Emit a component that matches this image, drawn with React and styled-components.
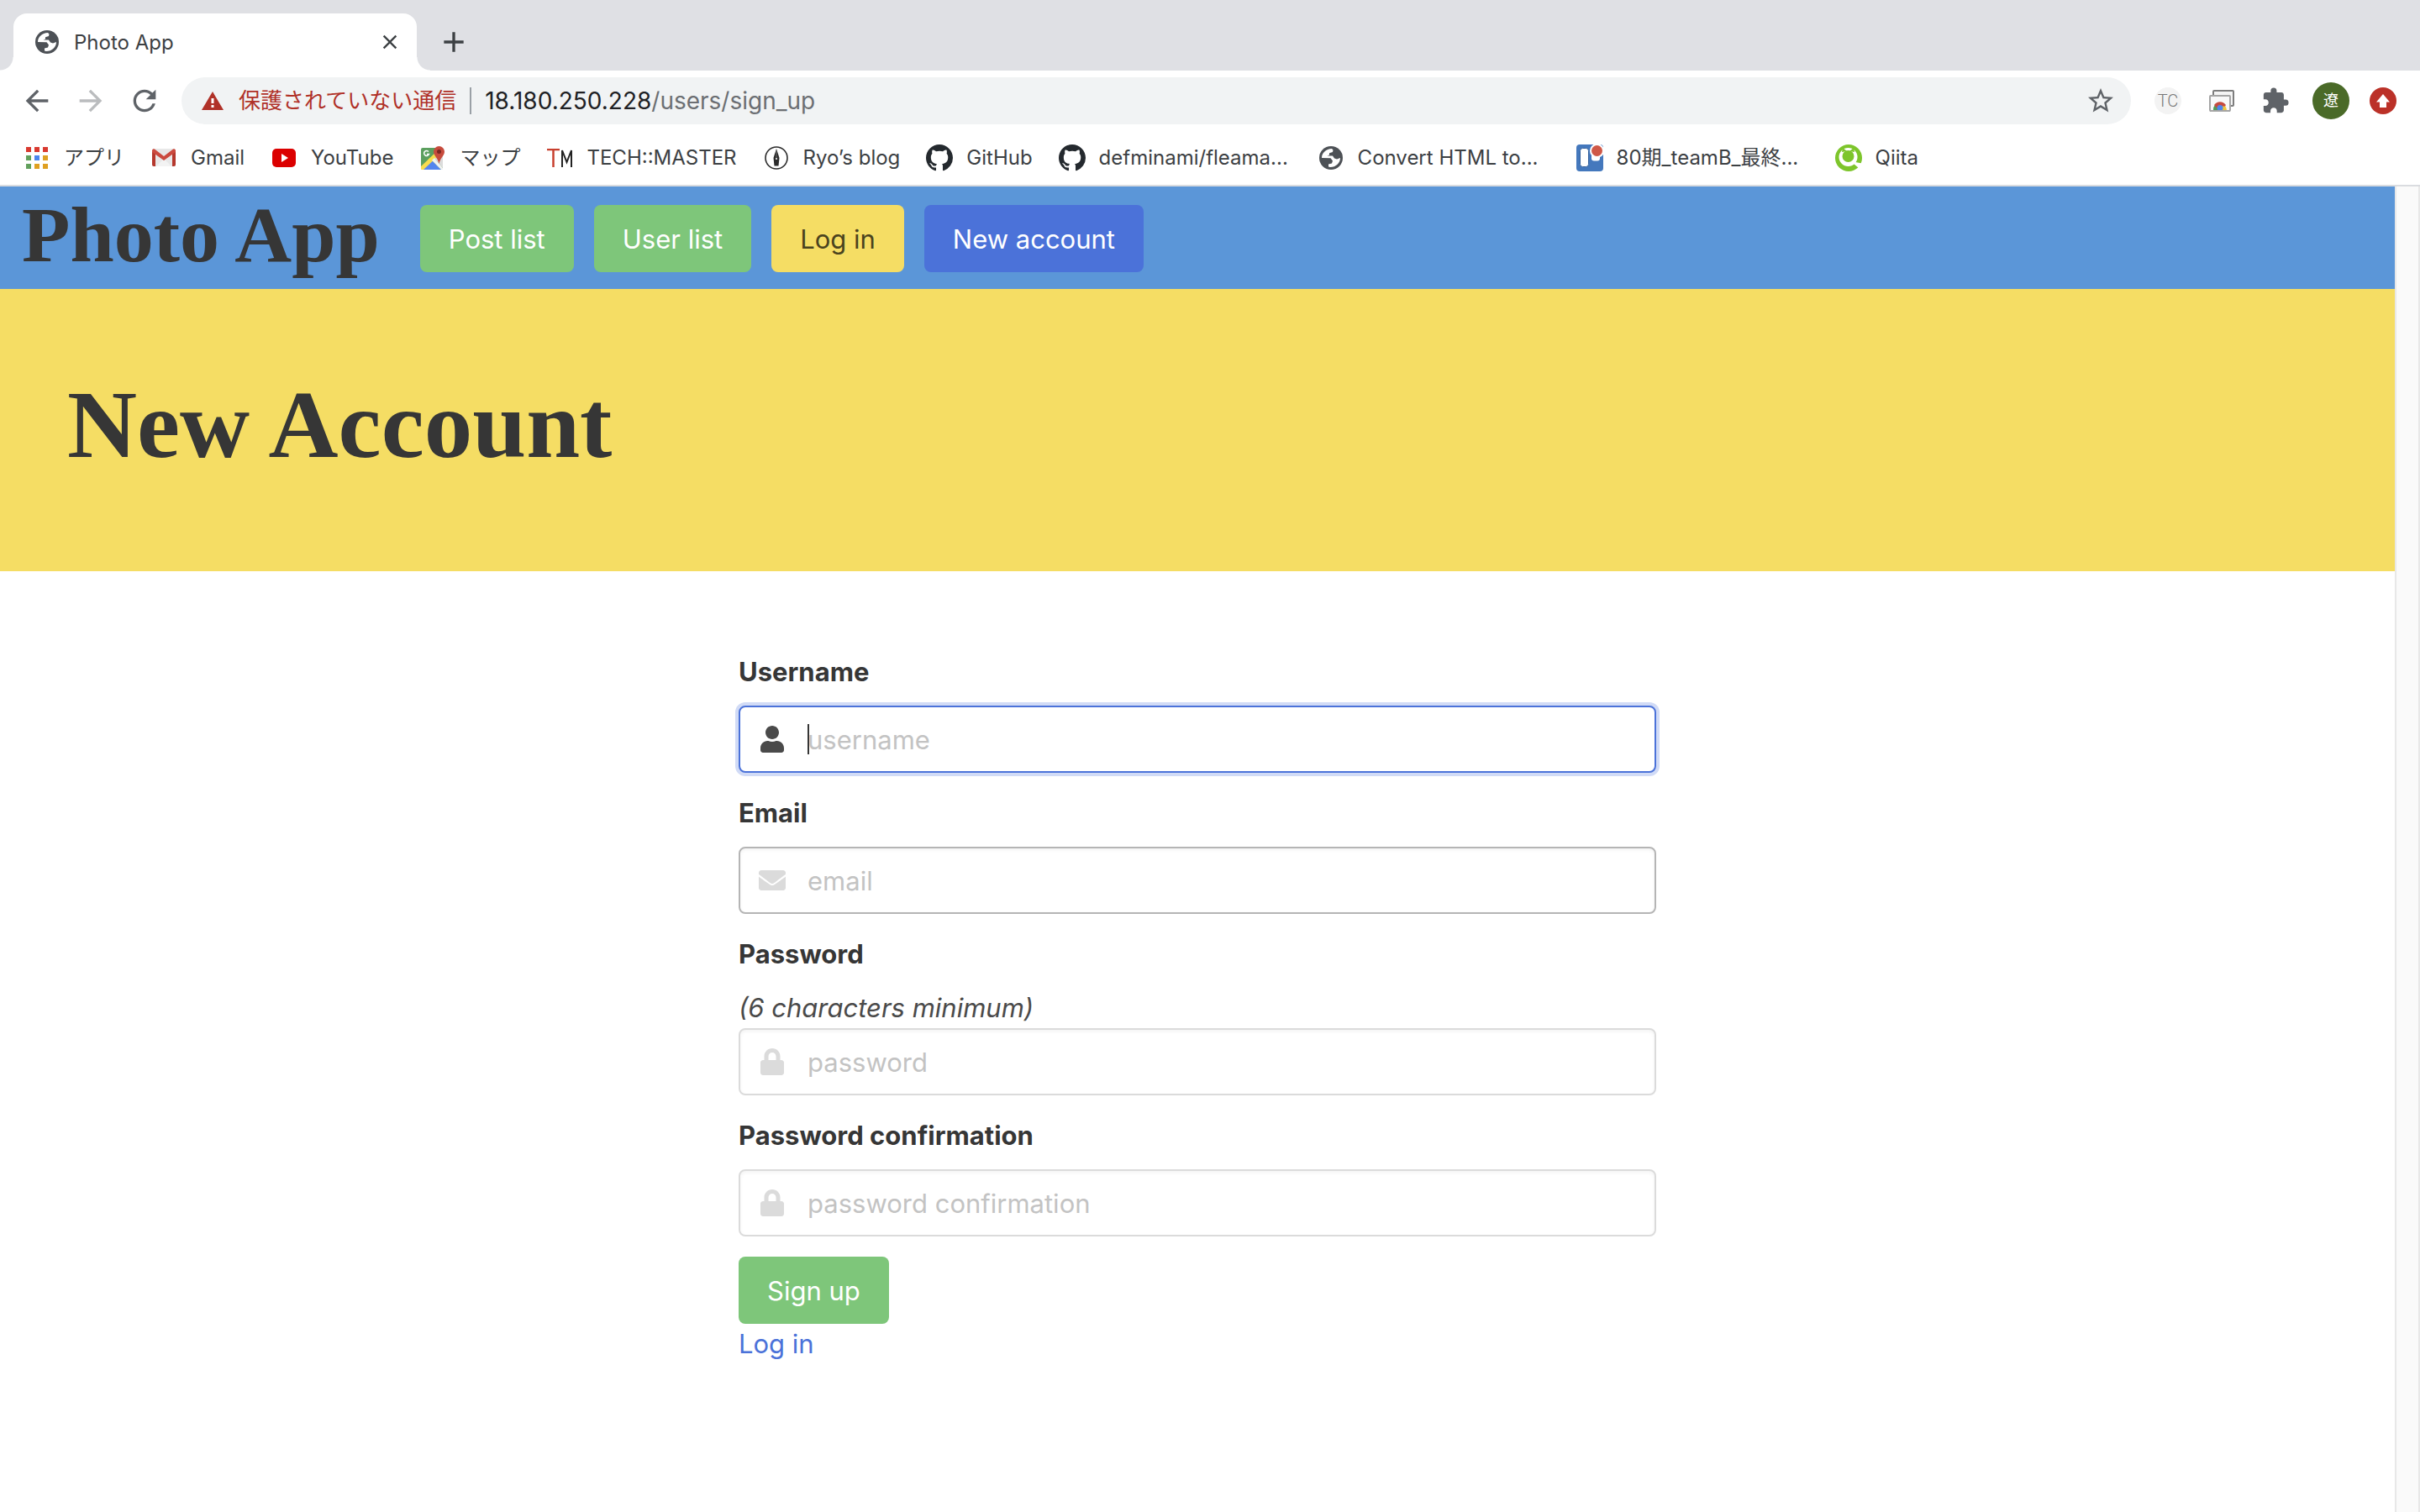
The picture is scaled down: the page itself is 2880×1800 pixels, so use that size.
import React from "react";
import styled, { createGlobalStyle, css } from "styled-components";
import {
  MdArrowBack,
  MdArrowForward,
  MdRefresh,
  MdStarBorder,
  MdExtension,
  MdAdd,
  MdClose,
} from "react-icons/md";
import { FaUser, FaEnvelope, FaLock } from "react-icons/fa";

const sans = `Inter, "Noto Sans CJK JP", "Liberation Sans", sans-serif`;
const serif = `Georgia, "Liberation Serif", serif`;

const GlobalStyle = createGlobalStyle`
  *, *::before, *::after { box-sizing: border-box; }
  body { margin: 0; background: #fff; color: #4a4a4a; font-family: ${sans}; }
  button, input { font-family: inherit; }
  h1, p { margin: 0; }
  a { text-decoration: none; }
  svg { display: block; flex: none; }
`;

const Window = styled.div`
  min-height: 100vh;
  display: flex;
  flex-direction: column;
`;

/* ---- browser frame ---- */

const TabStrip = styled.div`
  display: flex;
  align-items: flex-end;
  height: 84px;
  padding-left: 16px;
  background: #dfe0e4;
`;

const Tab = styled.div`
  position: relative;
  display: flex;
  align-items: center;
  gap: 18px;
  width: 480px;
  height: 68px;
  padding: 0 20px 0 26px;
  border-radius: 16px 16px 0 0;
  background: #fff;
  color: #3c4043;
  font-size: 24px;
  &::before, &::after {
    content: "";
    position: absolute;
    bottom: 0;
    width: 16px;
    height: 16px;
  }
  &::before {
    right: 100%;
    background: radial-gradient(circle at 0 0, transparent 15px, #fff 16px);
  }
  &::after {
    left: 100%;
    background: radial-gradient(circle at 100% 0, transparent 15px, #fff 16px);
  }
`;

const TabTitle = styled.span`
  flex: 1;
`;

const IconButton = styled.button`
  display: flex;
  align-items: center;
  justify-content: center;
  flex: none;
  width: ${(p) => p.$size || 40}px;
  height: ${(p) => p.$size || 40}px;
  padding: 0;
  border: 0;
  background: none;
  color: ${(p) => p.$color || "#5f6368"};
`;

const NewTab = styled(IconButton)`
  margin: 0 0 14px 24px;
`;

const Toolbar = styled.div`
  display: flex;
  align-items: center;
  gap: 24px;
  height: 72px;
  padding: 0 28px 0 24px;
`;

const AddressBar = styled.div`
  display: flex;
  align-items: center;
  flex: 1;
  height: 56px;
  padding: 0 16px 0 24px;
  border-radius: 28px;
  background: #f1f3f4;
`;

const Insecure = styled.span`
  display: flex;
  align-items: center;
  gap: 18px;
  padding-right: 16px;
  border-right: 2px solid #9aa0a6;
  color: #b03128;
  font-size: 26px;
  line-height: 32px;
`;

const Address = styled.span`
  flex: 1;
  padding-left: 16px;
  color: #202124;
  font-size: 28px;
`;

const AddressPath = styled.span`
  color: #6c6f73;
`;

const Extensions = styled.div`
  display: flex;
  align-items: center;
  gap: 24px;
`;

const Slot = styled.span`
  display: flex;
  align-items: center;
  justify-content: center;
  width: 40px;
`;

const TcBadge = styled.span`
  width: 32px;
  height: 32px;
  border-radius: 50%;
  background: #f3f3f3;
  color: #777;
  font: 300 20px/32px Roboto, sans-serif;
  text-align: center;
`;

const Avatar = styled.span`
  flex: none;
  width: 44px;
  height: 44px;
  border-radius: 50%;
  background: #4a6a28;
  color: #fff;
  font-size: 18px;
  line-height: 44px;
  text-align: center;
`;

const Bookmarks = styled.nav`
  display: flex;
  align-items: center;
  gap: 31px;
  height: 66px;
  padding: 0 28px;
  border-bottom: 2px solid #dadce0;
`;

const Bookmark = styled.a`
  display: flex;
  align-items: center;
  gap: 16px;
  min-width: ${(p) => (p.$long ? "277px" : "0")};
  color: #3c4043;
  font-size: 24px;
  line-height: 32px;
  white-space: nowrap;
`;

const BookmarkIcon = styled.span`
  display: flex;
  align-items: center;
  justify-content: center;
  width: 32px;
  height: 32px;
`;

/* ---- page ---- */

const Viewport = styled.div`
  display: flex;
  flex: 1;
`;

const Page = styled.main`
  flex: 1;
`;

const ScrollTrack = styled.div`
  width: 30px;
  border: solid #e8e8e8;
  border-width: 0 2px;
  background: #fafafa;
`;

const NavBar = styled.header`
  display: flex;
  align-items: center;
  gap: 24px;
  height: 122px;
  padding: 0 26px;
  background: #5b96d8;
`;

const Brand = styled.a`
  align-self: flex-start;
  margin-right: 24px;
  color: #363636;
  font: bold 94px/114px ${serif};
`;

const tones = {
  green: css`background: #7ec67a; color: #fff;`,
  yellow: css`background: #f5dd64; color: #4a431e;`,
  blue: css`background: #4b72d9; color: #fff;`,
};

const Button = styled.button`
  display: inline-flex;
  align-items: center;
  justify-content: center;
  height: 80px;
  padding: 2px 34px 0;
  border: 0;
  border-radius: 8px;
  font-size: 31px;
  line-height: 48px;
  white-space: nowrap;
  ${(p) => tones[p.$tone]}
`;

const NavItems = styled.nav`
  display: flex;
  gap: 24px;
  padding-top: 2px;
`;

const Hero = styled.section`
  padding: 96px 80px 108px;
  background: #f5dd64;
`;

const HeroTitle = styled.h1`
  color: #363636;
  font: bold 115px/132px ${serif};
`;

const Form = styled.form`
  display: flex;
  flex-direction: column;
  align-items: flex-start;
  max-width: 1092px;
  margin: 0 auto;
  padding: 96px 0;
  font-size: 31px;
  line-height: 48px;
`;

const Field = styled.div`
  width: 100%;
  margin-bottom: 24px;
`;

const Label = styled.label`
  display: block;
  margin-bottom: 16px;
  color: #363636;
  font-weight: 700;
`;

const Hint = styled.p`
  font-style: italic;
`;

const Control = styled.div`
  position: relative;
  color: ${(p) => (p.$focused ? "#4a4a4a" : "#dbdbdb")};
`;

const ControlIcon = styled.span`
  position: absolute;
  inset: 0 auto 0 0;
  display: flex;
  align-items: center;
  justify-content: center;
  width: 80px;
`;

const Caret = styled.span`
  position: absolute;
  top: 22px;
  left: 82px;
  width: 2px;
  height: 36px;
  background: #363636;
`;

const borders = { active: "#4b72d9", hover: "#b5b5b5", plain: "#dbdbdb" };

const Input = styled.input`
  display: block;
  width: 100%;
  height: 80px;
  padding: 0 24px 0 80px;
  border: 2px solid ${(p) => borders[p.$state]};
  border-radius: 8px;
  outline: 0;
  background: #fff;
  box-shadow: ${(p) =>
    p.$state === "active"
      ? "0 0 0 4px rgba(72, 113, 219, 0.25)"
      : "inset 0 2px 4px rgba(10, 10, 10, 0.05)"};
  color: #363636;
  font-size: 31px;
  caret-color: transparent;
  &::placeholder { color: #c3c3c3; opacity: 1; }
`;

const TextLink = styled.a`
  color: #4b72d9;
`;

/* ---- drawings ---- */

const GlobeIcon = () => (
  <svg width="28" height="28" viewBox="0 0 28 28">
    <circle cx="14" cy="14" r="14" fill="#4d5156" />
    <path
      d="M3 14C3 8 8 3.500 15 3l1.500 1.500L16 7l-4 1.200V10.500L9.500 11.500 16 11.500l2 3 3 1 4-1.500C25 20 20 25 13 25l-2-.5V21.500l4-1 1-3L13.500 14.200z"
      fill="#fff"
    />
  </svg>
);

const WarningIcon = () => (
  <svg width="26" height="22" viewBox="0 0 26 22">
    <path d="M13 0l13 22H0z" fill="#b03128" />
    <path d="M11.500 8h3v6h-3zM11.500 16h3v3h-3z" fill="#fff" />
  </svg>
);

const AppsIcon = () => {
  const colors = ["#d93a30", "#d93a30", "#d93a30", "#62a05c", "#4c86ee", "#dfa022", "#62a05c", "#dfa022", "#dfa022"];
  return (
    <svg width="26" height="26" viewBox="0 0 26 26">
      {colors.map((c, i) => (
        <rect key={i} x={(i % 3) * 10} y={Math.floor(i / 3) * 10} width="6" height="6" fill={c} />
      ))}
    </svg>
  );
};

const GmailIcon = () => (
  <svg width="28" height="22" viewBox="0 0 28 22">
    <rect width="28" height="21" rx="2" fill="#e8e8e8" />
    <path d="M5 21l9-9 9 9z" fill="#f3f3f3" />
    <path d="M0 2v17a2 2 0 0 0 2 2h2V6z" fill="#b5382d" />
    <path d="M28 2v17a2 2 0 0 1-2 2h-2V6z" fill="#b5382d" />
    <path d="M0 2a2 2 0 0 1 3-1.500L14 9 25 .5A2 2 0 0 1 28 2v2L14 14 0 4z" fill="#cb4a3f" />
  </svg>
);

const YouTubeIcon = () => (
  <svg width="28" height="22" viewBox="0 0 28 22">
    <rect width="28" height="22" rx="5" fill="#db0000" />
    <path d="M11 6l8 5-8 5z" fill="#fff" />
  </svg>
);

const MapsIcon = () => (
  <svg width="28" height="28" viewBox="0 0 28 28">
    <rect y="2" width="26" height="26" rx="2" fill="#5b9f5e" />
    <path d="M2 28L13 17l11 11z" fill="#5585ee" />
    <path d="M16 14l10 12v-14l-6-2z" fill="#dcdcdc" />
    <path d="M0 24L19 6l4 3L3 28H1l-1-1z" fill="#f7dc4e" />
    <path d="M13 17l11 11h2v-2l-10-12z" fill="#f1f1f1" />
    <path d="M21.500 0a6.500 6.500 0 0 0-6.500 6.500c0 5 5 7 6.500 14.500 1.500-7.500 6.500-9.500 6.500-14.500A6.500 6.500 0 0 0 21.500 0z" fill="#c74b3d" />
    <circle cx="21.500" cy="6.500" r="2.500" fill="#7a2620" />
    <path d="M9 6.500a3 3 0 1 0 .5 3H7" fill="none" stroke="#fff" strokeWidth="1.500" />
  </svg>
);

const TechMasterIcon = () => (
  <svg width="30" height="22" viewBox="0 0 30 22" fill="none" strokeWidth="2">
    <path d="M0 1h15M7.500 1v21" stroke="#c8402f" strokeWidth="2.500" />
    <path d="M18 22V2l5.500 14L29 2v20" stroke="#222" />
  </svg>
);

const PenIcon = () => (
  <svg width="28" height="28" viewBox="0 0 28 28">
    <circle cx="14" cy="14" r="13" fill="#fff" stroke="#2b2b2b" strokeWidth="1.600" />
    <path d="M14 3l-3.500 11 1 9.500h5l1-9.500z" fill="#2b2b2b" />
    <circle cx="14" cy="15" r="1" fill="#fff" />
    <path d="M14 4v10" stroke="#999" strokeWidth=".6" />
  </svg>
);

const GitHubIcon = () => (
  <svg width="32" height="32" viewBox="0 0 16 16" fill="#24292e">
    <path d="M8 0C3.580 0 0 3.580 0 8c0 3.540 2.290 6.530 5.470 7.590.4.070.55-.17.55-.38 0-.19-.01-.82-.01-1.490-2.010.37-2.530-.49-2.690-.94-.09-.23-.48-.94-.82-1.130-.28-.15-.68-.52-.01-.53.63-.01 1.080.58 1.230.82.72 1.210 1.870.87 2.330.66.07-.52.28-.87.51-1.070-1.780-.2-3.640-.89-3.640-3.950 0-.87.31-1.590.82-2.150-.08-.2-.36-1.020.08-2.120 0 0 .67-.21 2.200.82.64-.18 1.320-.27 2-.27s1.360.09 2 .27c1.530-1.040 2.200-.82 2.200-.82.44 1.100.16 1.920.08 2.120.51.56.82 1.270.82 2.150 0 3.070-1.870 3.750-3.650 3.950.29.25.54.73.54 1.480 0 1.070-.01 1.930-.01 2.200 0 .21.15.46.55.38A8.010 8.010 0 0 0 16 8c0-4.420-3.580-8-8-8z" />
  </svg>
);

const TrelloIcon = () => (
  <svg width="32" height="32" viewBox="0 0 32 32">
    <rect width="32" height="32" rx="4" fill="#4478bd" />
    <rect x="4.500" y="4.500" width="10" height="22" rx="3" fill="#fff" stroke="#35619c" />
    <rect x="18" y="4.500" width="10" height="15" rx="3" fill="#fff" />
    <circle cx="24.500" cy="7.500" r="8.500" fill="#fff" />
    <circle cx="24.500" cy="7.500" r="6.500" fill="#cf5847" />
  </svg>
);

const QiitaIcon = () => (
  <svg width="32" height="32" viewBox="0 0 32 32">
    <circle cx="16" cy="16" r="16" fill="#7dc52b" />
    <circle cx="15.500" cy="15" r="11" fill="#fff" />
    <path d="M22 23l2-2 8 1.500-4 5.500z" fill="#fff" />
    <circle cx="15.500" cy="14" r="7" fill="#7dc52b" />
    <path d="M8 9l1-5 5 4zM23 9l-1-5-5 4z" fill="#7dc52b" />
  </svg>
);

const RemoteDesktopIcon = () => (
  <svg width="30" height="26" viewBox="0 0 30 26">
    <rect x="5" y="1" width="24" height="18" rx="1" fill="#f4f4f4" stroke="#7d7d7d" strokeWidth="2" />
    <rect x="1" y="7" width="24" height="18" rx="1" fill="#f8f8f8" stroke="#a5a5a5" strokeWidth="2" />
    <path d="M5 24a8 8 0 0 1 2-6l6 6z" fill="#4f9b58" />
    <path d="M21 24a8 8 0 0 0-2-5h-6v5z" fill="#f0c73e" />
    <path d="M6 18a8.500 8.500 0 0 1 14 0l-1 1.500h-6l-3 3z" fill="#c64a3f" />
    <circle cx="13" cy="21.500" r="3.500" fill="#4d86ee" />
    <path d="M1 25h24" stroke="#a5a5a5" strokeWidth="2" />
  </svg>
);

const UpdateIcon = () => (
  <svg width="32" height="32" viewBox="0 0 32 32">
    <circle cx="16" cy="16" r="16" fill="#bb3128" />
    <path d="M16 8l8 9.500h-4V24h-8v-6.500H8z" fill="#fff" />
  </svg>
);

const bookmarks = [
  { label: "アプリ", icon: AppsIcon },
  { label: "Gmail", icon: GmailIcon },
  { label: "YouTube", icon: YouTubeIcon },
  { label: "マップ", icon: MapsIcon },
  { label: "TECH::MASTER", icon: TechMasterIcon },
  { label: "Ryo’s blog", icon: PenIcon },
  { label: "GitHub", icon: GitHubIcon },
  { label: "defminami/fleama...", icon: GitHubIcon, long: true },
  { label: "Convert HTML to...", icon: GlobeIcon, long: true },
  { label: "80期_teamB_最終...", icon: TrelloIcon, long: true },
  { label: "Qiita", icon: QiitaIcon },
];

const navItems = [
  ["Post list", "green"],
  ["User list", "green"],
  ["Log in", "yellow"],
  ["New account", "blue"],
];

const fields = [
  { id: "username", label: "Username", placeholder: "username", icon: FaUser, state: "active", type: "text" },
  { id: "email", label: "Email", placeholder: "email", icon: FaEnvelope, state: "hover", type: "email" },
  { id: "password", label: "Password", hint: "(6 characters minimum)", placeholder: "password", icon: FaLock, state: "plain", type: "password" },
  { id: "confirmation", label: "Password confirmation", placeholder: "password confirmation", icon: FaLock, state: "plain", type: "password" },
];

function Browser() {
  return (
    <>
      <TabStrip>
        <Tab>
          <GlobeIcon />
          <TabTitle>Photo App</TabTitle>
          <IconButton $size={24} $color="#3c4043" aria-label="Close tab">
            <MdClose size={28} />
          </IconButton>
        </Tab>
        <NewTab $color="#3c4043" aria-label="New tab">
          <MdAdd size={40} />
        </NewTab>
      </TabStrip>
      <Toolbar>
        <IconButton aria-label="Back"><MdArrowBack size={40} /></IconButton>
        <IconButton $color="#babcbe" aria-label="Forward"><MdArrowForward size={40} /></IconButton>
        <IconButton aria-label="Reload"><MdRefresh size={40} /></IconButton>
        <AddressBar>
          <Insecure>
            <WarningIcon />
            保護されていない通信
          </Insecure>
          <Address>
            18.180.250.228<AddressPath>/users/sign_up</AddressPath>
          </Address>
          <IconButton aria-label="Bookmark this page"><MdStarBorder size={36} /></IconButton>
        </AddressBar>
        <Extensions>
          <Slot><TcBadge>TC</TcBadge></Slot>
          <Slot><RemoteDesktopIcon /></Slot>
          <Slot><MdExtension size={34} color="#5f6368" /></Slot>
          <Avatar>遼</Avatar>
          <UpdateIcon />
        </Extensions>
      </Toolbar>
      <Bookmarks>
        {bookmarks.map(({ label, icon: Icon, long }) => (
          <Bookmark key={label} href="#" $long={long}>
            <BookmarkIcon><Icon /></BookmarkIcon>
            {label}
          </Bookmark>
        ))}
      </Bookmarks>
    </>
  );
}

function SignUpForm() {
  return (
    <Form>
      {fields.map(({ id, label, hint, placeholder, icon: Icon, state, type }) => (
        <Field key={id}>
          <Label htmlFor={id}>{label}</Label>
          {hint && <Hint>{hint}</Hint>}
          <Control $focused={state === "active"}>
            <Input id={id} type={type} placeholder={placeholder} $state={state} />
            <ControlIcon><Icon size={32} /></ControlIcon>
            {state === "active" && <Caret />}
          </Control>
        </Field>
      ))}
      <Button type="button" $tone="green">Sign up</Button>
      <TextLink href="#">Log in</TextLink>
    </Form>
  );
}

export default function App() {
  return (
    <Window>
      <GlobalStyle />
      <Browser />
      <Viewport>
        <Page>
          <NavBar>
            <Brand href="#">Photo App</Brand>
            <NavItems>
              {navItems.map(([label, tone]) => (
                <Button key={label} as="a" href="#" $tone={tone}>{label}</Button>
              ))}
            </NavItems>
          </NavBar>
          <Hero>
            <HeroTitle>New Account</HeroTitle>
          </Hero>
          <SignUpForm />
        </Page>
        <ScrollTrack />
      </Viewport>
    </Window>
  );
}
